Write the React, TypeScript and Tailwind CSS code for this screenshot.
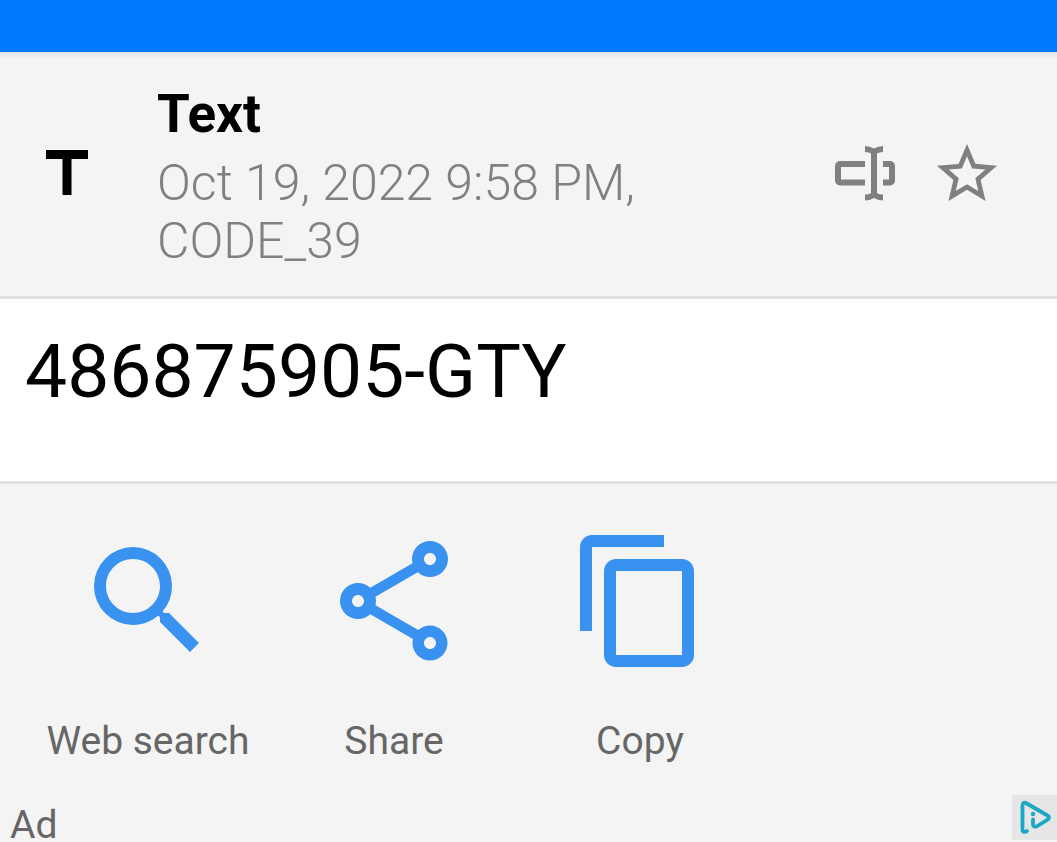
import React, { useState } from "react";
import { MdContentCopy, MdOutlineShare, MdSearch, MdStarOutline, MdTitle } from "react-icons/md";
import type { IconType } from "react-icons";

interface ScanResult {
  type: string;
  scannedAt: string;
  format: string;
  value: string;
}

interface Action {
  label: string;
  icon: IconType;
  onClick: () => void;
}

const result: ScanResult = {
  type: "Text",
  scannedAt: "Oct 19, 2022 9:58 PM",
  format: "CODE_39",
  value: "486875905-GTY",
};

const RenameIcon: React.FC = () => (
  <svg viewBox="0 0 72 72" className="w-[72px] h-[72px]" fill="currentColor" aria-hidden="true">
    <path d="M36 23H11a5 5 0 0 0-5 5v14.500a5 5 0 0 0 5 5h25v-6H12V29h24z" />
    <path d="M54 23h7a5 5 0 0 1 5 5v14.500a5 5 0 0 1-5 5h-7v-6h6V29h-6z" />
    <path d="M36 8q4.500 0 9 2.500Q49.500 8 54 8v6q-4 0-6 1.500v39.500q2 1.500 6 1.500v6q-4.500 0-9-2.500-4.500 2.500-9 2.500v-6q4 0 6-1.500V15.500Q40 14 36 14z" />
  </svg>
);

const AdChoicesIcon: React.FC = () => (
  <svg viewBox="0 0 45 45" className="w-[45px] h-[45px]" fill="none" aria-hidden="true">
    <path
      d="M15 36c-1 1.500-4.500 1-4.500-1V10.500c0-2.500 1.500-3.500 3.500-2.500l21.500 12.500c2 1.200 2 3 0 4.200L25.500 31c-2.500 1.500-4.500.5-4.500-2v-4.500"
      stroke="#1aa8c4"
      strokeWidth="3.800"
      strokeLinecap="round"
      strokeLinejoin="round"
    />
    <circle cx="21" cy="19" r="2.200" fill="#1aa8c4" />
  </svg>
);

const App: React.FC = () => {
  const [favorite, setFavorite] = useState(false);

  const actions: Action[] = [
    {
      label: "Web search",
      icon: MdSearch,
      onClick: () => window.open(`https://www.google.com/search?q=${encodeURIComponent(result.value)}`),
    },
    { label: "Share", icon: MdOutlineShare, onClick: () => navigator.share?.({ text: result.value }) },
    { label: "Copy", icon: MdContentCopy, onClick: () => navigator.clipboard?.writeText(result.value) },
  ];

  return (
    <div className="min-h-screen bg-[#f4f4f4] font-[Roboto,sans-serif]">
      {/* Top bar with its drop shadow */}
      <div className="h-[52px] bg-[#007aff]" />
      <div className="h-2 bg-linear-to-b from-[#e2e6e9] to-[#f4f4f4]" />

      {/* Result header */}
      <header className="flex items-center pl-[31px] pr-[54px] pt-[18px] pb-[26px] border-b-3 border-[#e1e1e1]">
        <MdTitle className="size-[72px] shrink-0 text-black" />
        <div className="flex-1 min-w-0 ml-[54px] pt-[5px]">
          <h1 className="text-[53px] leading-[62px] font-bold text-black">{result.type}</h1>
          <p className="mt-[9px] text-[50px] leading-[58px] font-light text-[#808080]">
            {result.scannedAt}, {result.format}
          </p>
        </div>
        <div className="flex shrink-0 gap-[30px] text-[#808080]">
          <button type="button" aria-label="Rename">
            <RenameIcon />
          </button>
          <button
            type="button"
            aria-label="Favorite"
            aria-pressed={favorite}
            onClick={() => setFavorite(!favorite)}
            className={favorite ? "text-[#3a92f0]" : ""}
          >
            <MdStarOutline className="size-[72px]" />
          </button>
        </div>
      </header>

      {/* Scanned value */}
      <main className="bg-white px-[25px] pt-7 pb-[65px] border-b-3 border-[#e1e1e1]">
        <p className="text-[75px] leading-[89px] text-black break-words">{result.value}</p>
      </main>

      {/* Actions */}
      <div className="flex flex-wrap px-[25px] pt-[45px]">
        {actions.map(({ label, icon: Icon, onClick }) => (
          <button
            key={label}
            type="button"
            onClick={onClick}
            className="w-[246px] flex flex-col items-center gap-[46px]"
          >
            <Icon className="size-[144px] text-[#3a92f0]" />
            <span className="text-[39px] leading-[45px] text-[#666666]">{label}</span>
          </button>
        ))}
      </div>

      {/* Ad */}
      <div className="flex items-start justify-between mt-[31px] pl-[10px]">
        <span className="pt-[13px] text-[39px] leading-[34px] text-[#666666]">Ad</span>
        <button type="button" aria-label="Ad choices" className="bg-[#e6e6e6]">
          <AdChoicesIcon />
        </button>
      </div>
    </div>
  );
};

export default App;
